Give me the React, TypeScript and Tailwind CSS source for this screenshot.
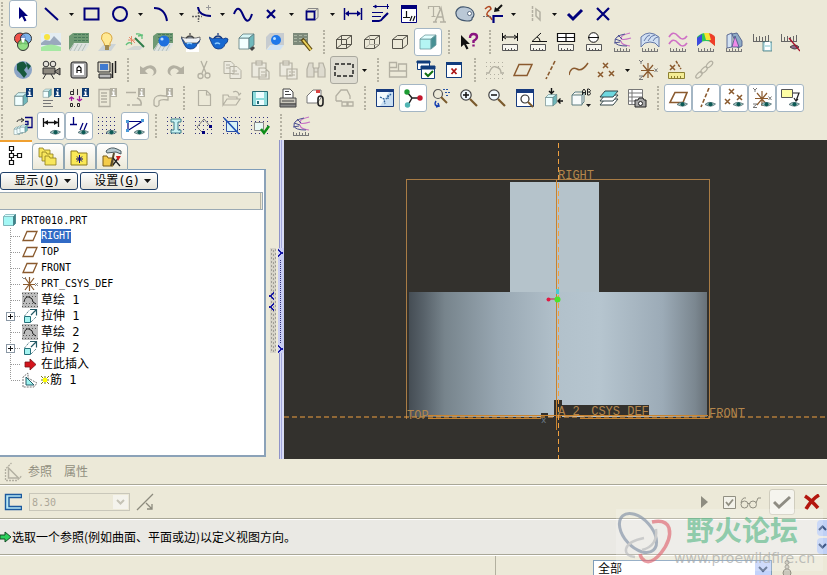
import React, { useState } from 'react';

const NAVY = '#00007b';
const GRAY = '#b3b0a2';
const BROWN = '#8a5a2e';

type IconMap = Record<string, React.ReactNode>;

/* ---------- Shared icon parts ---------- */

const Eye = () => (
  <g>
    <path d="M9 16.5q4-4 10.500-.5q-4 4-10.500.5z" fill="#9fc4c0" stroke="#3f5c63" strokeWidth=".7" />
    <circle cx="14.500" cy="16.200" r="2" fill="#0d5a55" />
  </g>
);

const Ruler = ({ y = 13 }: { y?: number }) => (
  <path
    d={`M2.500 ${y - 0.5}h15v6h-15zM5.500 ${y + 6}v-3M8.500 ${y + 6}v-2M11.500 ${y + 6}v-3M14.500 ${y + 6}v-2`}
    fill="#f6f5ee"
    stroke="#555"
    strokeWidth="1"
  />
);

const Comb = () => (
  <path d="M2 19.500h16M2.500 19v-3M5.500 19v-2M8.500 19v-3M11.500 19v-2M14.500 19v-3M17.500 19v-2" fill="none" stroke="#777" strokeWidth="1" />
);

const Info = ({ off }: { off?: boolean }) => (
  <g>
    <rect x="13" y="0" width="7" height="9" fill={off ? GRAY : '#0d3a72'} />
    <path d="M16 1h1.500v1.500h-1.500zM15 3.500h2.500v3.500h1v1h-4v-1h1.200v-2.500h-.7z" fill="#fff" />
  </g>
);

const Cube = ({ x = 0, y = 0, s = 1 }: { x?: number; y?: number; s?: number }) => (
  <g transform={`translate(${x} ${y}) scale(${s})`} stroke="#5a7c80" strokeWidth=".8">
    <path d="M2 6h10v11h-10z" fill="#f2ffff" />
    <path d="M2 6l4-4h11l-5 4z" fill="#d8f6f6" />
    <path d="M12 6l5-4v11l-5 4z" fill="#6fb8bb" />
  </g>
);

const Teapot = ({ white }: { white?: boolean }) => (
  <g>
    {white && <path d="M5 12h13v8h-13z" fill="#fff" />}
    <path d="M4 7L0 5l3 7q2 5 6 5q6 0 7-5q3-1 3-5q-2-2-5 0l-1-1H5z" fill="#1768d0" stroke="#12357e" strokeWidth=".8" />
    {white && <path d="M3 9L0 5l4 1h11l4-1v3l-3 3H4z" fill="#eef1f4" stroke="#444" strokeWidth=".7" />}
    <path d="M5 6q4-4 8 0M9 3V1" stroke={white ? '#444' : '#12357e'} fill="none" strokeWidth="1.200" />
    <path d="M6 12q2-2 5 0" stroke="#8ccbff" fill="none" strokeWidth="1.500" />
  </g>
);

const Floor = () => (
  <g>
    <path d="M0 4L4 1h16v12H5L0 18z" fill="#6f9a74" />
    <path d="M5 2.500h14M5 5.500h14M5 8.500h14M5 11.500h14" stroke="#48795a" strokeDasharray="3 1" />
    <path d="M0 19l5-8h15v2l-4 6z" fill="#dfe3e0" />
    <path d="M1 19l4-7M5 19l4-7M9 19l4-7M13 19l4-7" stroke="#aab6b0" strokeWidth=".8" />
  </g>
);

const Csys = () => (
  <g fill="none">
    <path d="M5 5l10 12M15 5L5 17M3 10.500h13M10 3v15" stroke={BROWN} strokeWidth="1.200" />
    <path d="M1 0l2 2l2-2M3 2v2M1 16h4l-4 3.500h4M16.500 8.500l3 3.500M19.500 8.500l-3 3.500" stroke="#777" />
  </g>
);

const Crosses = ({ pts }: { pts: number[][] }) => (
  <g stroke={BROWN} strokeWidth="1.500">
    {pts.map(([x, y]) => (
      <path key={`${x}-${y}`} d={`M${x - 2} ${y - 2}l5 5M${x + 3} ${y - 2}l-5 5`} />
    ))}
  </g>
);

const DotGrid = () => (
  <path d="M1 1.500h18M1 5.500h18M1 9.500h18M1 13.500h18M1 17.500h18" stroke="#33337f" strokeDasharray="1 3" />
);

const Glass = ({ sign }: { sign: string }) => (
  <g fill="none">
    <path d="M11 11l7 7" stroke="#7a5a2c" strokeWidth="2.200" />
    <circle cx="7" cy="7" r="5.200" fill="#f4fbff" stroke="#444" strokeWidth="1.200" />
    <path d={sign} stroke="#111" strokeWidth="1.500" />
  </g>
);

const WireCube = ({ inner }: { inner?: React.ReactNode }) => (
  <g fill="none" stroke="#55534a" strokeWidth="1">
    <path d="M2.500 7.500h10v9h-10zM2.500 7.500l5-4h10l-5 4M17.500 3.500v9l-5 4" />
    {inner}
  </g>
);

const ICONS: IconMap = {
  /* sketcher */
  select: <path d="M6 3v12l3-2.500l2.500 5l2-1l-2.300-4.500h3.800z" fill={NAVY} />,
  line: <path d="M4 4l13 12" stroke={NAVY} strokeWidth="2" />,
  rect: <path d="M2.500 4.500h14v11h-14z" stroke={NAVY} strokeWidth="2" fill="none" />,
  circle: <circle cx="10" cy="10" r="7" stroke={NAVY} strokeWidth="2" fill="none" />,
  arc: <path d="M3 4q11 0 13 13" stroke={NAVY} strokeWidth="2" fill="none" />,
  fillet: (
    <g fill="none">
      <path d="M6 3q1 9 13 9" stroke={NAVY} strokeWidth="2" />
      <path d="M0 12.500h10M6.500 8v10" stroke="#666" strokeDasharray="2 1" strokeWidth="1.500" />
      <path d="M16.500 1v5M14 3.500h5" stroke="#999" />
    </g>
  ),
  spline: <path d="M1 10q4-11 9 1t9-1" stroke={NAVY} strokeWidth="2" fill="none" />,
  point: <path d="M6 6l8 8M14 6l-8 8" stroke={NAVY} strokeWidth="2.200" />,
  edge: (
    <g fill="none">
      <path d="M4 7l2-2.500h10v9l-3 2.500M13 7l3-2.500" stroke="#888" />
      <path d="M4.500 7.500h8v8h-8z" stroke={NAVY} strokeWidth="1.800" />
    </g>
  ),
  dimension: (
    <g stroke={NAVY} fill={NAVY}>
      <path d="M1.500 4v12M18.500 4v12M3 9.500h14" fill="none" strokeWidth="1.500" />
      <path d="M2 9.500l4-3v6zM18 9.500l-4-3v6z" stroke="none" />
    </g>
  ),
  modify: (
    <g fill="none" stroke={NAVY}>
      <path d="M2 2.500h16M16.500 0v5M3 2.500l2-1.500v3z" />
      <path d="M1 17h7q2 0 4-3l5-5" strokeWidth="2.200" />
      <path d="M1 8.500h11M1 12.500h9" />
    </g>
  ),
  constrain: (
    <g>
      <path d="M2.500 1.500h15v17h-15z" fill="#fff" stroke={NAVY} />
      <path d="M2 1h16v4h-16z" fill={NAVY} />
      <path d="M7.500 7v6M4 13.500h7M11 17l2-5M14 17l2-5" stroke="#111" fill="none" strokeWidth="1.200" />
    </g>
  ),
  text: (
    <g fill="none" stroke={GRAY}>
      <path d="M6 18h4M13 18h6M8 18L14 4l3 14M10 13h6" strokeWidth="1.500" />
      <path d="M1.500 5V2.500h11V5M6.500 3v9M4.500 12.500h4" strokeWidth="1.200" />
    </g>
  ),
  palette: (
    <g>
      <path d="M1 8q2-6 9-5q8 1 9 7q0 3-2 4q1 3-5 3Q0 16 1 8z" fill="#bac8d6" stroke="#42566d" strokeWidth="1.200" />
      <circle cx="14.500" cy="9.500" r="2" fill="#fff" stroke="#42566d" strokeWidth=".8" />
    </g>
  ),
  trim: (
    <g fill="none">
      <path d="M2 5q5-5 6 0q-5 4-4 6q4 2 5 5" stroke="#b14720" strokeWidth="1.500" />
      <path d="M10 12h10M10.500 11v8" stroke={NAVY} strokeWidth="2.200" />
      <path d="M19 1l-5 5" stroke="#111" strokeWidth="2" />
      <path d="M11 8l1-5l5 4z" fill="#111" />
      <path d="M0 12.500h9" stroke="#777" strokeDasharray="2 1" />
    </g>
  ),
  mirror: (
    <g stroke={GRAY} fill="none">
      <path d="M8.500 2v16" strokeDasharray="3 1" strokeWidth="1.500" />
      <path d="M12 5l4 3v8l-4-4z" strokeWidth="1.500" />
    </g>
  ),
  done: <path d="M3 10l5 5l9-9" stroke={NAVY} strokeWidth="3" fill="none" />,
  quit: <path d="M4 4l12 12M16 4L4 16" stroke={NAVY} strokeWidth="2.200" />,
  /* render */
  colors: (
    <g strokeWidth="1" stroke="#333">
      <circle cx="7" cy="6.500" r="5.500" fill="#f0524a" />
      <circle cx="13" cy="6.500" r="5.500" fill="#6aa9ee" fillOpacity=".85" />
      <circle cx="10" cy="13" r="5.500" fill="#7cdc70" fillOpacity=".8" />
      <path d="M8 6h4l-1 4.500H9z" fill="#fff" stroke="none" />
    </g>
  ),
  scene: (
    <g>
      <path d="M0 1h20v18h-20z" fill="#e4edf2" />
      <path d="M0 11l4-3l5 1l4-5l7 7v2H0z" fill="#9aa9bd" />
      <circle cx="6" cy="5" r="3" fill="#f7e441" />
      <path d="M0 15q10-5 20 0v4H0z" fill="#a5e8a2" />
    </g>
  ),
  room: <Floor />,
  light: (
    <g>
      <path d="M1 19l6-7h12l-5 7z" fill="#ccd4d8" />
      <path d="M7 11q-4-4-2-8q3-4 8-1q4 4 0 9v3h-5z" fill="#ffe994" stroke="#d8a53c" />
      <path d="M8 13h4v5h-4z" fill="#a08a50" />
    </g>
  ),
  magic: (
    <g fill="none">
      <path d="M1 18l8-4h10l-4 4z" fill="#d3d7d4" />
      <path d="M10 6l9 9" stroke="#2f7d4a" strokeWidth="2" />
      <path d="M3 8h7M6.500 4v9M4 5l6 6" stroke="#e88a6a" />
      <path d="M11 2q7-1 6 5M1 13q3-4 6-1M13 4l5-1" stroke="#61c07a" strokeWidth="1.300" />
    </g>
  ),
  ballroom: (
    <g>
      <Floor />
      <circle cx="11" cy="9" r="5.500" fill="#1e70de" />
      <circle cx="9" cy="7" r="1.600" fill="#b9dcff" />
    </g>
  ),
  teapot1: <Teapot white />,
  teapot2: <Teapot />,
  block: (
    <g>
      <path d="M12 16l4-2l2 2l-3 3z" fill="#444" />
      <Cube />
    </g>
  ),
  ball: (
    <g>
      <path d="M1 5l4-4h14v12H5l-4 5z" fill="#c7ccd0" />
      <path d="M2 18l4-5h13l-4 5z" fill="#cfe2f4" />
      <circle cx="11" cy="8" r="5" fill="#1e78ea" />
      <circle cx="9.500" cy="6.500" r="1.500" fill="#bce0ff" />
    </g>
  ),
  paint: (
    <g>
      <path d="M0 1h15v12h-15z" fill="#7d8a7b" />
      <path d="M1 3.500h13M1 6.500h13M1 9.500h9" stroke="#a9b5a2" strokeDasharray="3 2" />
      <path d="M9 7l9 11" stroke="#5f4a10" strokeWidth="4" />
      <path d="M10 8l8 10" stroke="#ecd35c" strokeWidth="2" />
    </g>
  ),
  wire: <WireCube inner={<path d="M7.500 3.500v9h10M2.500 16.500l5-4" />} />,
  hidden: <WireCube inner={<path d="M7.500 3.500v9h10M2.500 16.500l5-4" stroke="#b0ada0" />} />,
  nohidden: <WireCube />,
  shaded: (
    <g stroke="#6d9a9e" strokeWidth=".8">
      <path d="M2 7h11v10h-11z" fill="#b4f5f3" />
      <path d="M2 7l5-4h11l-5 4z" fill="#e2ffff" />
      <path d="M13 7l5-4v10l-5 4z" fill="#479094" />
    </g>
  ),
  help: (
    <g>
      <path d="M2 3v12l3-2.500l2.500 5l2-1l-2.500-4.500h4z" fill="#111" />
      <path d="M11 6q0-4 3.500-4t3.500 3q0 2-3.500 4v2M14.500 12.500v2" stroke="#8a1480" strokeWidth="2.400" fill="none" />
    </g>
  ),
  distance: (
    <g>
      <path d="M2.500 1v8M17.500 1v8M3 5h14M6 3l-3 2l3 2M14 3l3 2l-3 2" fill="none" stroke="#111" />
      <Ruler />
    </g>
  ),
  angle: (
    <g>
      <path d="M13 1L4 9.500h15M9 5q3 1 3 4" fill="none" stroke="#111" />
      <Ruler />
    </g>
  ),
  area: (
    <g>
      <path d="M1.500 1.500h17v8h-17zM10 1v9M2 5.500h16" fill="#fff" stroke="#111" strokeWidth="1.200" />
      <Ruler />
    </g>
  ),
  diameter: (
    <g>
      <circle cx="9.500" cy="5.500" r="4.800" fill="#fff" stroke="#111" />
      <path d="M4 5.500h11" stroke="#111" />
      <Ruler />
    </g>
  ),
  curvature: (
    <g fill="none">
      <path d="M18 1q-9 2-9 5t10 0M18 14q-9-1-9-5" stroke="#c872c6" strokeWidth="1.200" />
      <path d="M13 2Q2 4 3 10q1 4 12 4M3 7l6 2M2 11l6-1M6 3l4 4" stroke="#4b4f93" />
      <Comb />
    </g>
  ),
  section: (
    <g>
      <path d="M1 15V5q8-8 18 0v10l-4-4q-5-2-10 0z" fill="#d0dff2" stroke="#6579a8" />
      <path d="M4 9q3-6 6-6M8 9q3-6 7-6M13 9q2-4 5-4" fill="none" stroke="#6579a8" />
      <Comb />
    </g>
  ),
  offset: (
    <g fill="none">
      <path d="M1 5q4-7 9-1t9 0M1 12q4-7 9-1t9 0" stroke="#cf70c6" strokeWidth="1.700" />
      <Comb />
    </g>
  ),
  gauss: (
    <g>
      <path d="M1 14V5q8-8 18 0v9l-4-4q-5-2-10 0z" fill="#2dc75b" />
      <path d="M1 14V6l5-4v8z" fill="#3c49df" />
      <path d="M11 1q5 0 8 4v9l-5-4z" fill="#ef3d29" />
      <path d="M8 1h5l2 7h-5z" fill="#f5e634" />
      <Comb />
    </g>
  ),
  draft: (
    <g strokeWidth=".8" stroke="#435283">
      <path d="M3 3l5-2v14l-5 1z" fill="#d3e2f2" />
      <path d="M8 2l5-1l5 8v5l-4 2z" fill="#8fabc6" />
      <path d="M8 15l3-11l4 11z" fill="#f08ae8" />
      <Comb />
    </g>
  ),
  savean: (
    <g>
      <path d="M1.500 2v7M4.500 5v4M7.500 4v5M10.500 5v4M13.500 4v5M16.500 3v6M1 9.500h16" stroke="#666" fill="none" />
      <path d="M11 10h9v9h-9z" fill="#bfe2e6" stroke="#447a80" strokeWidth=".8" />
      <path d="M13 10h5v3h-5zM13 15h5v3h-5z" fill="#fff" />
    </g>
  ),
  hidean: (
    <g>
      <path d="M1.500 2v7M4.500 5v4M7.500 4v5M10.500 5v4M13.500 4v5M16.500 3v6M1 9.500h16" stroke="#666" fill="none" />
      <path d="M10 15q5-4 9 0q-4 4-9 0z" fill="#868" stroke="#444" />
      <path d="M9 6l11 13" stroke="#a5122a" strokeWidth="1.300" />
    </g>
  ),
  /* app */
  globe: (
    <g>
      <circle cx="10" cy="10" r="9" fill="#8ba4c6" />
      <path d="M4 4q4-3 7-2l3 4l-3 4l3 4l-3 4l-4-5l-3-3zM13 2l5 4l-3 4z" fill="#17583c" />
    </g>
  ),
  camera: (
    <g stroke="#333" fill="#8e8a80">
      <circle cx="5" cy="4" r="2.800" fill="#e4e2da" />
      <circle cx="12" cy="4" r="2.800" fill="#e4e2da" />
      <path d="M2 8h12v6h-12zM14 11l5-3v7l-5-3z" />
      <path d="M5 14l-3 5M10 14l3 5" />
    </g>
  ),
  mapkey: (
    <g>
      <path d="M2 4q0-2 2-2h12q2 0 2 2v12q0 2-2 2h-12q-2 0-2-2z" fill="#aaa" stroke="#222" />
      <path d="M5 4h10v11h-10z" fill="#fff" />
      <path d="M8 13V8l2-2l2 2v5M8 10.500h4" stroke="#111" fill="none" strokeWidth="1.200" />
    </g>
  ),
  computer: (
    <g>
      <path d="M1 2h12v10h-12z" fill="#d8d5c8" stroke="#222" />
      <path d="M3 4h8v6h-8z" fill="#3f7ad0" />
      <path d="M2 14h12v4h-12z" fill="#bbb" stroke="#222" />
      <path d="M15.500 3v15M18.500 1v12" stroke="#222" strokeWidth="1.500" />
    </g>
  ),
  undo: <path d="M2 6v8h8l-3-3q4-5 8-1q2 3-1 6q6-2 4-7q-4-7-13-1z" fill={GRAY} />,
  redo: <path d="M18 6v8h-8l3-3q-4-5-8-1q-2 3 1 6q-6-2-4-7q4-7 13-1z" fill={GRAY} />,
  cut: (
    <g stroke={GRAY} strokeWidth="1.300" fill="none">
      <path d="M7 1l5 12M13 1L8 13" />
      <circle cx="6.500" cy="16" r="2.500" />
      <circle cx="13.500" cy="15.500" r="2.500" />
    </g>
  ),
  copy: <path d="M2 1.500h7l3 3v9H2zM8 6.500h7l4 4v8H8zM4 5h4M4 8h4M10 11h5M10 14h7" fill="#eceadf" stroke={GRAY} />,
  paste: <path d="M2 3h14v14H2zM6 1h6v4H6zM9 8h6l4 4v7H9zM11 12h4M11 15h6" fill="#eceadf" stroke={GRAY} strokeWidth="1.200" />,
  pastesp: <path d="M2 3h12v13H2zM5 1h6v4H5zM9 9h10v10H9zM11 12h2M14 12h3M11 15h2M14 15h3" fill="#eceadf" stroke={GRAY} strokeWidth="1.200" />,
  find: <path d="M3 3h4v4l1 2v8H1V9zM13 3h4l2 6v8h-7V9l1-2zM8 8h4v4H8z" fill="#dedbcf" stroke={GRAY} strokeWidth="1.200" />,
  marquee: <path d="M1 4h18v12H1z" fill="none" stroke="#222" strokeWidth="1.500" strokeDasharray="4 2" />,
  window: <path d="M1.500 2.500h7v5h-7zM1.500 8v9h17v-13h-8v7h-9M11 11h7" fill="none" stroke={GRAY} strokeWidth="1.300" />,
  activate: (
    <g stroke="#113c7d" fill="#fff">
      <path d="M1.500 1.500h12v8h-12z" />
      <path d="M1 1h13v2h-13z" fill="#113c7d" />
      <path d="M5.500 6.500h13v12h-13z" />
      <path d="M5 6h14v3h-14z" fill="#113c7d" />
      <path d="M9 13l3 3l5-5" fill="none" stroke="#127012" strokeWidth="2" />
    </g>
  ),
  close: (
    <g>
      <path d="M2.500 2.500h15v15h-15z" fill="#fff" stroke="#113c7d" />
      <path d="M2 2h16v3h-16z" fill="#113c7d" />
      <path d="M7.500 8.500l5 5.500M12.500 8.500l-5 5.500" stroke="#ad1616" strokeWidth="1.800" />
    </g>
  ),
  sketch: (
    <g fill="none" stroke={GRAY}>
      <path d="M1 2.500h18M1 6.500h18M1 14.500h18M1 18.500h18" strokeDasharray="1 3" />
      <path d="M1 13l3 0q3-8 7-6q5 1 5 6h3" strokeWidth="1.400" />
    </g>
  ),
  plane: <path d="M6 4.500h13l-5 11H1z" fill="none" stroke={BROWN} strokeWidth="1.500" />,
  axis: <path d="M14 1L5 19" stroke={BROWN} strokeWidth="1.600" strokeDasharray="4 2" />,
  curve: <path d="M0 15q2-9 8-6q5 3 11-6" stroke={BROWN} strokeWidth="1.500" fill="none" />,
  points: <Crosses pts={[[8, 5], [3, 14], [14, 13]]} />,
  csys: <Csys />,
  analysis: (
    <g>
      <Crosses pts={[[6, 7]]} />
      <path d="M10 1l5 8" stroke={BROWN} strokeDasharray="3 1" strokeWidth="1.500" />
      <path d="M2.500 12.500h16v6h-16z" fill="#f3ec94" stroke="#8c8031" />
      <path d="M5.500 19v-3M8.500 19v-3M11.500 19v-3M14.500 19v-3" stroke="#8c8031" />
    </g>
  ),
  chain: (
    <g fill="none" stroke={GRAY} strokeWidth="1.300">
      <ellipse cx="5" cy="15" rx="4" ry="2" transform="rotate(-45 5 15)" />
      <ellipse cx="10" cy="10" rx="4" ry="2" transform="rotate(-45 10 10)" />
      <ellipse cx="15.500" cy="4.500" rx="4" ry="2" transform="rotate(-45 15.500 4.500)" />
    </g>
  ),
  /* file and view */
  infopart: (
    <g>
      <Cube y={3} s={0.85} />
      <Info />
    </g>
  ),
  infofeat: (
    <g>
      <Cube x={1} s={0.55} />
      <path d="M2 12.500h10M2 15.500h8M2 18.500h10" stroke="#777" />
      <Info />
    </g>
  ),
  infodim: (
    <g>
      <path d="M4.500 1v6M4 3.500H1.500v3H4M8.500 1v6" stroke="#333" fill="none" />
      <path d="M0 11l2.500-2l2.500 2M2.500 9v4M8 11l2.500 2l2.500-2M10.500 8v5" stroke="#a01a9c" fill="none" strokeWidth="1.300" />
      <path d="M1.500 15.500h2v3h-2zM8.500 15.500h2v3h-2zM5.500 18v1" stroke="#222" fill="none" />
      <Info />
    </g>
  ),
  inforep: (
    <g>
      <path d="M2 1.500h11v17H2zM4 5h6M4 8h6M4 11h6M4 14h6" fill="none" stroke={GRAY} strokeWidth="1.300" />
      <Info off />
    </g>
  ),
  infoedge: (
    <g>
      <path d="M1 4.500h10M12 10q5 2 4 7H7M2 17h3" fill="none" stroke={GRAY} strokeWidth="1.500" />
      <Info off />
    </g>
  ),
  infopipe: (
    <g>
      <path d="M12 8q-10-2-11 4v5q3 3 5 0v-4q2-2 9-1v-4z" fill="none" stroke={GRAY} strokeWidth="1.300" />
      <Info off />
    </g>
  ),
  new: <path d="M4.500 2.500h8l4 4v11H4.500zM12.500 3v4h4" fill="none" stroke={GRAY} strokeWidth="1.200" />,
  open: <path d="M1 17V7h5l1 2h8v2H5zM5 11h13l-4 6H1M11 4q5-2 6 3l2-2" fill="none" stroke={GRAY} strokeWidth="1.200" />,
  save: (
    <g>
      <path d="M2.500 3.500h15v14h-15z" fill="#8fdcdc" stroke="#276a74" />
      <path d="M6 4h8v6H6zM6 12h8v5H6z" fill="#eefcff" />
      <path d="M7 13h2v3H7z" fill="#276a74" />
    </g>
  ),
  print: (
    <g stroke="#444">
      <path d="M5 10V1h7l3 3v6" fill="#fff" />
      <path d="M2 10h16v6H2z" fill="#c9c6bb" />
      <path d="M4 13h12M7 3.500h4M7 6.500h6" />
      <path d="M2 16h16v3H2z" fill="#888" />
    </g>
  ),
  mail: (
    <g>
      <path d="M1 8l6-6h8v8l-4 5H1z" fill="#fff" stroke="#777" />
      <path d="M10 2h4v3h-4z" fill="#d84545" />
      <path d="M12 11q0-3 2.500-3t2.500 3v4q0 3-2.500 3t-2.500-3z" fill="none" stroke="#222" strokeWidth="1.600" />
    </g>
  ),
  maillink: <path d="M2 13V8l5-6h6l3 6v3M2 13h6M8 14h5v4H8zM14 14h5v4h-5z" fill="none" stroke={GRAY} strokeWidth="1.300" />,
  repaint: (
    <g>
      <path d="M1.500 1.500h17v17h-17z" fill="#c9dff2" stroke="#173b7f" />
      <path d="M2 4h12L5 18H2z" fill="#f4fafd" />
      <path d="M1 1h18v3H1z" fill="#173b7f" />
      <path d="M5 9l4 2l1 5M16 6l-5 5M13 7v4" stroke="#2b609a" strokeWidth="1.300" strokeDasharray="2 1" fill="none" />
    </g>
  ),
  spin: (
    <g>
      <path d="M4 4l5 6h8M9 10l-4 7" stroke="#222" strokeWidth="1.500" fill="none" />
      <circle cx="4" cy="4" r="2.700" fill="#1c9b32" />
      <circle cx="17" cy="10" r="2.700" fill="#c4162c" />
      <circle cx="4.500" cy="17" r="2.700" fill="#51b5b3" />
    </g>
  ),
  orient: (
    <g fill="none">
      <circle cx="7" cy="6" r="4.500" stroke="#555" strokeWidth="1.200" />
      <path d="M10 9l6 6" stroke="#7a5a2c" strokeWidth="2" />
      <path d="M12 1.500h5M14 4.500h5M15 7.500h3" stroke="#2653a5" strokeDasharray="2 1" />
      <path d="M5 13q-3 5 3 5l-1-3M8 18l-3 1" stroke="#163fb0" strokeWidth="1.500" />
    </g>
  ),
  zoomin: <Glass sign="M4 7h6M7 4v6" />,
  zoomout: <Glass sign="M4 7h6" />,
  refit: (
    <g>
      <path d="M1.500 1.500h17v17h-17z" fill="#fff" stroke="#173b7f" />
      <path d="M1 1h18v4H1z" fill="#173b7f" />
      <circle cx="10" cy="11" r="4" fill="none" stroke="#333" strokeWidth="1.200" />
      <path d="M13 14l5 5" stroke="#7a5a2c" strokeWidth="2" />
    </g>
  ),
  reorient: (
    <g>
      <Cube x={1} y={5} s={0.75} />
      <path d="M8.500 0v5M6 3l2.500 2.500l2.500-2.500M20 13h-5M17.500 10.500l-2.500 2.500l2.500 2.500" stroke="#111" fill="none" strokeWidth="1.400" />
    </g>
  ),
  saved: (
    <g fill="none">
      <path d="M1 7l3-3h7M1 7h10v10H1zM11 7l2-2v9l-2 2" stroke="#5c7c80" fill="#f8fbfb" />
      <path d="M11.500 7V3l1.500-2l1.500 2v4M11.500 4.500h3M16.500 1v6h2l1-1.500l-1-1.500l1-1.500L18 1zM16.500 4h2" stroke="#222" />
      <path d="M15 16h5l-2.500 3z" fill="#222" />
    </g>
  ),
  layers: (
    <g stroke="#35474a">
      <path d="M6 11h13l-5 6H1z" fill="#fff" />
      <path d="M6 7h13l-5 6H1z" fill="#fff" />
      <path d="M6 3h13l-5 6H1z" fill="#6fd8df" />
    </g>
  ),
  viewmgr: (
    <g>
      <path d="M1.500 1.500h14v15h-14zM1 5h14M1 9h14M1 13h14M5 1v15" fill="#fff" stroke="#777" />
      <path d="M8 12h3l1-2h4l1 2h2v7H8z" fill="#a6a6a6" stroke="#222" />
      <circle cx="13.500" cy="15.500" r="2" fill="#fff" stroke="#222" />
    </g>
  ),
  showplane: (
    <g>
      <path d="M7 4.500h12l-4 10H2z" fill="none" stroke={BROWN} strokeWidth="1.600" />
      <Eye />
    </g>
  ),
  showaxis: (
    <g>
      <path d="M13 0L5 19" stroke={BROWN} strokeWidth="1.600" strokeDasharray="4 2" />
      <Eye />
    </g>
  ),
  showpoints: (
    <g>
      <Crosses pts={[[7, 3], [15, 9], [3, 13]]} />
      <Eye />
    </g>
  ),
  showcsys: (
    <g>
      <Csys />
      <Eye />
    </g>
  ),
  shownotes: (
    <g>
      <path d="M1.500 1.500h11v8H1.500z" fill="#ffffa5" stroke="#555" />
      <path d="M13 5h6l-3 8M14 10l2 3l2-2" stroke="#222" fill="none" strokeWidth="1.200" />
      <Eye />
    </g>
  ),
  /* sketch display */
  sketchview: (
    <g>
      <path d="M12 1.500h7v10h-6M12 5.500h3v3h-3" stroke={NAVY} strokeWidth="1.300" fill="none" />
      <path d="M4 6q0-3 7-2M8 2l3 2l-3 2" stroke="#333" fill="none" />
      <Cube x={0} y={10} s={0.5} />
      <Cube x={3} y={9} s={0.5} />
      <Cube x={6} y={8} s={0.5} />
    </g>
  ),
  showdims: (
    <g>
      <path d="M2.500 2v9M17.500 2v9M3 6.500h14" stroke="#111" strokeWidth="1.300" />
      <path d="M3 6.500l4-2.500v5zM17 6.500l-4-2.500v5z" fill="#111" />
      <Eye />
    </g>
  ),
  showcons: (
    <g>
      <path d="M4.500 1v7M1 8.500h7M11 14l3-7M15 14l3-7" stroke={NAVY} strokeWidth="1.300" />
      <Eye />
    </g>
  ),
  showgrid: (
    <g>
      <DotGrid />
      <Eye />
    </g>
  ),
  showverts: (
    <g>
      <path d="M3 5.500h14l-14 9z" stroke={NAVY} fill="none" strokeWidth="1.200" />
      <path d="M1 4h3v3H1zM16 3h3v3h-3zM1 13h3v3h-3z" fill="#4a9ad8" />
      <Eye />
    </g>
  ),
  diag1: (
    <g>
      <DotGrid />
      <path d="M5 3h10v3h-3v8h3v3H5v-3h3V6H5z" fill="#c8f2f3" stroke="#3c7c88" />
    </g>
  ),
  diag2: (
    <g>
      <DotGrid />
      <path d="M3 11l7-8l6 7M3 11l5 5" stroke="#777" fill="none" />
      <path d="M15 9h3v3h-3zM8 15h3v3h-3z" fill={NAVY} />
    </g>
  ),
  diag3: (
    <g>
      <DotGrid />
      <path d="M4.500 5.500h11v10h-11z" fill="#d8f2f6" stroke="#2b4ea5" />
      <path d="M2 2l15 16" stroke="#1b4eb5" strokeWidth="1.600" />
    </g>
  ),
  diag4: (
    <g>
      <DotGrid />
      <path d="M4.500 6.500h9v8H4.500z" fill="#e8f8f6" stroke="#888" />
      <path d="M11 13l3 4l5-7" stroke="#0d8d16" strokeWidth="2.500" fill="none" />
    </g>
  ),
};

/* ---------- Toolbar rows ----------
   "|" separator, "v" drop-down arrow, trailing "*" pressed, "#" pressed gray */

const TOOLBARS: { name: string; items: string[] }[] = [
  {
    name: 'Sketcher',
    items: 'select* line v rect circle v arc v fillet v spline point v edge v dimension modify constrain text palette trim v mirror v done quit'.split(' '),
  },
  {
    name: 'Render and measure',
    items: 'colors scene room light magic ballroom teapot1 teapot2 block ball paint | wire hidden nohidden shaded* | help | distance angle area diameter curvature section offset gauss draft savean hidean'.split(' '),
  },
  {
    name: 'Edit and datum',
    items: 'globe camera mapkey computer | undo redo cut copy paste pastesp find marquee# v | window activate close | sketch plane axis curve points v csys analysis chain'.split(' '),
  },
  {
    name: 'File and view',
    items: 'infopart infofeat infodim inforep infoedge infopipe | new open save print mail maillink | repaint spin* orient zoomin zoomout refit reorient saved layers viewmgr | showplane* showaxis* showpoints* showcsys* shownotes*'.split(' '),
  },
  {
    name: 'Sketch display',
    items: 'sketchview showdims* showcons* showgrid showverts* | diag1 diag2 diag3 diag4 | curvature'.split(' '),
  },
];

const Toolbar: React.FC<{ name: string; items: string[] }> = ({ name, items }) => (
  <div role="toolbar" aria-label={name} className="flex h-7 items-center">
    <span className="mr-1.5 ml-px h-6 border-l-2 border-dotted border-[#b5b2a3]" />
    {items.map((item, i) => {
      if (item === '|') {
        return (
          <span key={i} className="flex w-[13px] justify-center">
            <span className="h-6 border-l-2 border-dotted border-[#b5b2a3]" />
          </span>
        );
      }
      if (item === 'v') {
        return (
          <button key={i} aria-label="More" className="flex h-7 w-[13px] items-center justify-center">
            <svg width="5" height="3" viewBox="0 0 5 3">
              <path d="M0 0h5L2.500 3z" fill="#111" />
            </svg>
          </button>
        );
      }
      const id = item.replace(/[*#]/, '');
      const state = item.endsWith('*')
        ? 'border-[#a4b6c4] bg-white'
        : item.endsWith('#')
        ? 'border-[#aaa99f] bg-[#dfddd2]'
        : 'border-transparent';
      return (
        <button key={i} aria-label={id} className={`flex size-7 items-center justify-center rounded-[3px] border ${state}`}>
          <svg width="20" height="20" viewBox="0 0 20 20" className="shrink-0">
            {ICONS[id]}
          </svg>
        </button>
      );
    })}
  </div>
);

/* ---------- Model tree ---------- */

const FEATURE_ICONS: IconMap = {
  plane: <path d="M5 3.500h10l-4 9H1z" fill="none" stroke={BROWN} strokeWidth="1.300" />,
  csys: (
    <g fill="none">
      <path d="M3 2l9 12M12 2L3 14M1 8.500h12M7.500 1v14" stroke={BROWN} strokeWidth="1.200" />
      <path d="M0 1l2 2l2-2M13 7l3 3M16 7l-3 3" stroke="#888" />
    </g>
  ),
  sketch: (
    <g fill="none">
      <path d="M0 0h16v16H0z" fill="#bdbdbd" />
      <path d="M0 1.500h16M0 14.500h16M1 4.500h14M1 11.500h14" stroke="#555" strokeDasharray="1 2" />
      <path d="M2 10q1-6 5-5t4 5l3 2" stroke="#222" />
    </g>
  ),
  extrude: (
    <g fill="none">
      <path d="M2.500 8.500h6v6H2.500z" fill="#a4f3f0" stroke="#24707a" />
      <path d="M8 1.500h6.500v6M9 7l5-5" stroke="#245a66" strokeWidth="1.200" />
      <path d="M2.500 8l5-6M9 14l5-5" stroke="#245a66" strokeDasharray="1 1" />
    </g>
  ),
  insert: <path d="M3 6h5V3l6 5.500L8 14v-3H3z" fill="#d4141c" stroke="#76151a" strokeWidth=".8" />,
  rib: (
    <g fill="none">
      <path d="M1 15V5l5-4v5l9 5l-3 4z" stroke="#777" strokeDasharray="2 1" />
      <path d="M4 5v8h8z" fill="#9cf3ef" stroke="#245a66" />
    </g>
  ),
};

interface Feature {
  label: string;
  icon: string;
  expandable?: boolean;
  failed?: boolean;
}

const FEATURES: Feature[] = [
  { label: 'RIGHT', icon: 'plane' },
  { label: 'TOP', icon: 'plane' },
  { label: 'FRONT', icon: 'plane' },
  { label: 'PRT_CSYS_DEF', icon: 'csys' },
  { label: '草绘 1', icon: 'sketch' },
  { label: '拉伸 1', icon: 'extrude', expandable: true },
  { label: '草绘 2', icon: 'sketch' },
  { label: '拉伸 2', icon: 'extrude', expandable: true },
  { label: '在此插入', icon: 'insert' },
  { label: '筋 1', icon: 'rib', failed: true },
];

const ModelTree = () => {
  const [selected, setSelected] = useState('RIGHT');

  return (
    <ul className="pt-0.5 text-black">
      <li className="flex h-4 items-center gap-1 pl-0.5 text-[10px]">
        <svg width="15" height="14" viewBox="0 0 15 14">
          <path d="M1.500 3.500h10v9h-10z" fill="#a4f7f5" stroke="#7fb5ba" />
          <path d="M1.500 3.500l2-2h10l-2 2z" fill="#d9ffff" stroke="#7fb5ba" strokeWidth=".8" />
          <path d="M11.500 3.500l2-2v9l-2 2z" fill="#3f8188" stroke="#3f8188" strokeWidth=".8" />
        </svg>
        PRT0010.PRT
      </li>
      {FEATURES.map((f, i) => (
        <li key={f.label} className="flex h-4 items-center pl-[5px]">
          <svg width="16" height="16" viewBox="0 0 16 16" className="shrink-0" shapeRendering="crispEdges">
            <path d={i === FEATURES.length - 1 ? 'M5.500 0v8M6 8.500h10' : 'M5.500 0v16M6 8.500h10'} stroke="#999" strokeDasharray="1 1" fill="none" />
            {f.expandable && (
              <g>
                <path d="M1.500 4.500h8v8h-8z" fill="#fff" stroke="#8b98a5" />
                <path d="M3 8.500h5M5.500 6v5" stroke="#111" />
              </g>
            )}
          </svg>
          <svg width="16" height="16" viewBox="0 0 16 16" className="mr-[3px] ml-px shrink-0">
            {FEATURE_ICONS[f.icon]}
          </svg>
          {f.failed && (
            <svg width="8" height="8" viewBox="0 0 8 8" className="mr-px">
              <path d="M0 0l8 8M8 0L0 8M4 0v8M0 4h8" stroke="#77771a" />
              <path d="M2 2h4v4H2z" fill="#ff0" />
            </svg>
          )}
          <button
            onClick={() => setSelected(f.label)}
            className={`h-3.5 whitespace-pre leading-[14px] ${i < 4 ? 'text-[10px]' : 'text-xs'} ${
              selected === f.label ? 'bg-[#316ac5] text-white' : ''
            }`}
          >
            {f.label}
          </button>
        </li>
      ))}
    </ul>
  );
};

const MenuButton: React.FC<{ label: string; hotkey: string }> = ({ label, hotkey }) => (
  <button className="flex h-[18px] w-[78px] items-center justify-end gap-1 rounded-[3px] border border-[#1f3f68] bg-gradient-to-b from-white to-[#e4e2d8] pr-1.5 text-xs leading-4">
    <span>
      {label}(<u>{hotkey}</u>)
    </span>
    <svg width="7" height="4" viewBox="0 0 7 4">
      <path d="M0 0h7L3.500 4z" fill="#111" />
    </svg>
  </button>
);

const Folder = ({ x, y }: { x: number; y: number }) => (
  <path d={`M${x} ${y}h4l1 2h6v7H${x}z`} fill="#f8e75c" stroke="#8c7b1c" strokeWidth=".8" />
);

const TABS = [
  {
    label: 'Model tree',
    icon: <path d="M5.500 2.500h4v4h-4zM5.500 9.500h4v4h-4zM5.500 16.500h4v4h-4zM13.500 9.500h4v4h-4zM7.500 7v2M7.500 14v2M10 11.500h3" fill="none" stroke="#111" strokeWidth="1.200" />,
  },
  {
    label: 'Folders',
    icon: (
      <g>
        <Folder x={3} y={3} />
        <Folder x={6} y={7} />
        <Folder x={9} y={11} />
      </g>
    ),
  },
  {
    label: 'Favorites',
    icon: (
      <g>
        <path d="M3 6h6l1 2h9v12H3z" fill="#fae956" stroke="#8c7b1c" />
        <path d="M11.500 10v8M8 14h7M9 11.500l5 5M14 11.500l-5 5" stroke={NAVY} />
      </g>
    ),
  },
  {
    label: 'Connections',
    icon: (
      <g>
        <path d="M3 11h4l1 2h5v8H3z" fill="#f4cb4a" stroke="#7a5d16" />
        <path d="M6 6q5-5 11-2l4 2v3l-5-2l-9 1z" fill="#b7c9cf" stroke="#4a5a60" />
        <path d="M14 8l-3 13" stroke="#5a4a2a" strokeWidth="2" />
        <path d="M13 13l7 8M19 12l-6 8" stroke="#222" strokeWidth="1.300" />
        <path d="M16 11l5 0l-3 5z" fill="#d31d1d" />
      </g>
    ),
  },
];

const Navigator = () => (
  <aside className="flex w-[266px] shrink-0 flex-col pb-0.5">
    <div role="tablist" className="flex h-[30px] shrink-0 items-end">
      {TABS.map((tab, i) => (
        <button
          key={tab.label}
          role="tab"
          aria-label={tab.label}
          aria-selected={i === 0}
          className={`flex w-8 items-center justify-center ${
            i === 0
              ? 'h-[30px] border-t-2 border-[#f0a030] bg-white'
              : 'h-[27px] rounded-t border border-[#91a7b4] bg-gradient-to-b from-white to-[#ece9d8]'
          }`}
        >
          <svg width="24" height="24" viewBox="0 0 24 24" className="shrink-0">
            {tab.icon}
          </svg>
        </button>
      ))}
      <span className="flex-1 self-end border-b border-[#7f9db9]" />
    </div>
    <div className="flex min-h-0 flex-1 flex-col border-r-2 border-b-2 border-[#8ba2b8] bg-white">
      <div className="flex shrink-0 gap-0.5 pt-0.5 pb-0.5">
        <MenuButton label="显示" hotkey="O" />
        <MenuButton label="设置" hotkey="G" />
      </div>
      <div className="mr-px h-[18px] shrink-0 border border-l-0 border-[#9aa9b4] bg-[#ece9d8] pr-px">
        <div className="h-full border-r border-[#b7b4a4]" />
      </div>
      <ModelTree />
    </div>
  </aside>
);

const Sash = () => (
  <div className="flex w-[18px] shrink-0 justify-end">
    <svg width="16" height="100%" className="h-full" shapeRendering="crispEdges">
      <path d="M11.500 0v1000" stroke="#8f93c8" />
      <path d="M12 0h4v1000h-4z" fill="#d7daf3" />
      <path d="M13.500 0v1000" stroke="#a3a7dc" />
      <path d="M2 108h6v105H2z" fill="#d6d3c8" />
      <path d="M10 108h6v105h-6z" fill="#c9cdf2" />
      <path d="M3.500 109v103M5.500 110v102M7.500 109v103" stroke="#a09e96" strokeDasharray="2 2" />
      <path d="M12.500 120v84" stroke="#33337c" strokeDasharray="1 1" />
      <path d="M10 110l4 3l-4 3M10 206l4 3l-4 3M6 153l-4 3l4 3M6 164l-4 3l4 3" fill="none" stroke="#1717a5" strokeWidth="1.500" />
    </svg>
  </div>
);

/* ---------- Graphics window ---------- */

const Viewport = () => (
  <main className="min-w-0 flex-1 bg-[#33312d]">
    <svg viewBox="284 140 543 319" preserveAspectRatio="xMidYMid slice" className="h-full w-full font-['Liberation_Mono',monospace]">
      <defs>
        <linearGradient id="drum">
          <stop offset="0" stopColor="#454d54" />
          <stop offset=".05" stopColor="#58626a" />
          <stop offset=".12" stopColor="#77848c" />
          <stop offset=".3" stopColor="#98a7b2" />
          <stop offset=".5" stopColor="#b2c1cb" />
          <stop offset=".64" stopColor="#b6c5cf" />
          <stop offset=".85" stopColor="#9cabb7" />
          <stop offset=".96" stopColor="#7b8790" />
          <stop offset="1" stopColor="#687178" />
        </linearGradient>
      </defs>
      <path d="M510 182h89v111h-89z" fill="#b5c3cb" />
      <path d="M409 292h298v125H409z" fill="url(#drum)" />
      <path d="M541 413h7v7h-7zM554 400h8v17h-8zM562 405h87v11h-87z" fill="#33312d" />
      <path d="M406 179h304v1h-304zM406 179h1v240h-1zM709 179h1v240h-1z" fill="#a97c45" />
      <path d="M428 415h280v1h-280zM428 418h113v1h-113zM580 418h129v1h-129zM556 180h1v250h-1z" fill="#c8832f" />
      <path d="M558.500 143v316" stroke="#f0a040" strokeDasharray="5 3" />
      <path d="M284 417h543" stroke="#f0a040" strokeDasharray="5 3" />
      <path d="M548 299h9" stroke="#d01c3c" />
      <circle cx="548.500" cy="299.500" r="2" fill="#e11a43" />
      <circle cx="557.500" cy="299.500" r="3" fill="#4be42c" />
      <path d="M556 289h3v5h-3z" fill="#4bc9d0" />
      <g fill="#b3864c" fontSize="12">
        <text x="558" y="179">RIGHT</text>
        <text x="407" y="419">TOP</text>
        <text x="709" y="417">FRONT</text>
        <text x="558" y="415">A_2</text>
        <text x="584" y="415">_CSYS_DEF</text>
      </g>
      <text x="541" y="423" fill="#6d7d8a" fontSize="9">x</text>
    </svg>
  </main>
);

/* ---------- Dashboard, messages and status ---------- */

const Dashboard = () => (
  <section className="shrink-0">
    <div className="flex h-[26px] items-center border-b border-[#a9a797] pl-1 text-xs text-[#918f80]">
      <svg width="20" height="20" viewBox="0 0 20 20" fill="none" stroke={GRAY}>
        <path d="M1.500 18V7l6-6M2 18.500h11l5-5" strokeDasharray="2 1" strokeWidth="1.300" />
        <path d="M4.500 6v10h10z" strokeWidth="1.500" />
      </svg>
      <button className="ml-1">参照</button>
      <button className="ml-3">属性</button>
    </div>
    <div className="flex h-[34px] items-center border-t border-b border-t-white border-b-[#a9a797] px-1">
      <svg width="18" height="18" viewBox="0 0 18 18">
        <path d="M1.500 1.500h16v3H5v9h12.500v3h-16z" fill="#b8e8f5" stroke="#1c5a9e" strokeWidth="1.400" />
      </svg>
      <label className="relative ml-[7px] flex">
        <select disabled aria-label="厚度" className="h-[18px] w-[101px] appearance-none border border-[#c9c7ba] bg-[#ece9d8] px-0.5 text-[10px] text-[#aca899] opacity-100">
          <option>8.30</option>
        </select>
        <svg width="15" height="14" viewBox="0 0 15 14" className="pointer-events-none absolute top-0.5 right-0.5">
          <path d="M0 0h15v14H0z" fill="#f4f3ec" />
          <path d="M4 5l3.500 3.500L11 5" fill="none" stroke="#c5c3b6" strokeWidth="2" />
        </svg>
      </label>
      <button aria-label="反向" className="ml-1.5">
        <svg width="18" height="18" viewBox="0 0 18 18" fill="none" stroke="#8c8a7d" strokeWidth="1.300">
          <path d="M1 17L17 1M10 10l6 6M16 11v5h-5" />
        </svg>
      </button>
      <div className="mr-0.5 ml-auto flex items-center">
        <button aria-label="继续">
          <svg width="8" height="14" viewBox="0 0 8 14">
            <path d="M0 1l7 6l-7 6z" fill="#8e8c80" />
          </svg>
        </button>
        <button role="checkbox" aria-checked="true" aria-label="预览" className="ml-3.5 flex items-center gap-1">
          <svg width="13" height="13" viewBox="0 0 13 13" fill="none" stroke="#918f82">
            <path d="M.5.5h12v12H.5z" fill="#f3f2ea" />
            <path d="M3 6l2.500 3L10 3.500" strokeWidth="1.800" />
          </svg>
          <svg width="21" height="13" viewBox="0 0 21 13" fill="none" stroke="#918f82">
            <circle cx="4.500" cy="8.500" r="3.500" />
            <circle cx="13" cy="8.500" r="3.500" />
            <path d="M1 7q1-6 5-5M8 8q1-2 2 0M16 7l2-5h3" />
          </svg>
        </button>
        <button aria-label="确定" className="ml-2 flex h-[26px] w-[26px] items-center justify-center rounded-[3px] border border-[#d0cdbe] bg-[#f5f4ee]">
          <svg width="18" height="16" viewBox="0 0 18 16">
            <path d="M1 8l5 5L17 3" fill="none" stroke="#8e8c83" strokeWidth="3" />
          </svg>
        </button>
        <button aria-label="取消" className="ml-2">
          <svg width="18" height="16" viewBox="0 0 18 16">
            <path d="M2 2q6 4 13 12M16 1Q9 5 3 15" fill="none" stroke="#b3160e" strokeWidth="3.500" />
          </svg>
        </button>
      </div>
    </div>
  </section>
);

const ScrollButton: React.FC<{ label: string; d: string }> = ({ label, d }) => (
  <button aria-label={label} className="flex h-4 w-2.5 items-center justify-center rounded-l-sm bg-[#bfd0f5]">
    <svg width="9" height="6" viewBox="0 0 9 6">
      <path d={d} fill="none" stroke="#3c5585" strokeWidth="2" />
    </svg>
  </button>
);

const MessageBar = () => (
  <div className="flex h-9 shrink-0 items-center justify-between border-t border-b border-t-white border-b-[#a9a797] bg-[#eae9e4]">
    <p className="flex items-center font-['Noto_Sans_CJK_SC',sans-serif] text-xs whitespace-nowrap text-black">
      <svg width="12" height="12" viewBox="0 0 12 12">
        <path d="M0 4h5V1l6 5l-6 5V8H0z" fill="#2cd05c" stroke="#144d25" />
      </svg>
      选取一个参照(例如曲面、平面或边)以定义视图方向。
    </p>
    <div className="flex flex-col gap-0.5">
      <ScrollButton label="向上" d="M1 5l3.500-3.500L8 5" />
      <ScrollButton label="向下" d="M1 1l3.500 3.500L8 1" />
    </div>
  </div>
);

const StatusBar = () => (
  <footer className="flex h-5 shrink-0 items-start overflow-hidden border-t border-white">
    <div className="h-full flex-1 border-r border-[#b3b09f]" />
    <div className="flex w-[331px] shrink-0 justify-start pt-1 pl-[97px]">
      <label className="relative flex">
        <select aria-label="过滤器" className="h-[18px] w-[179px] appearance-none border border-[#7f9db9] bg-white px-1 text-xs leading-4">
          <option>全部</option>
        </select>
        <svg width="16" height="16" viewBox="0 0 16 16" className="pointer-events-none absolute top-px right-px">
          <path d="M0 0h16v16H0z" fill="#c3d3fb" />
          <path d="M4 6l4 4l4-4" fill="none" stroke="#4d6185" strokeWidth="2" />
        </svg>
      </label>
      <svg width="14" height="18" viewBox="0 0 14 18" className="ml-2" fill="#c9c7bb" stroke="#918f82">
        <circle cx="7" cy="2.500" r="2" />
        <circle cx="7" cy="7" r="2" />
        <circle cx="7" cy="13" r="4" />
      </svg>
    </div>
  </footer>
);

const Watermark = () => (
  <div className="pointer-events-none absolute right-1 bottom-1 flex h-[62px] w-[207px] bg-white/20">
    <svg width="62" height="62" viewBox="0 0 62 62" fill="none" className="shrink-0 opacity-65">
      <ellipse cx="22" cy="24" rx="14" ry="23" transform="rotate(-42 22 24)" stroke="#8191a6" strokeWidth="3" />
      <path d="M36 13q14-3 17 6q3 11-8 25q-9 11-16 8q-4-2-5-7" stroke="#df6670" strokeWidth="3.500" />
      <path d="M28 29q-16 3-18 11q-1 7 9 8M40 20q2 17-14 21" stroke="#b7b9bc" strokeWidth="2.500" />
    </svg>
    <div className="-ml-1 flex flex-col whitespace-nowrap">
      <span className="pl-3 font-['Noto_Sans_CJK_SC',sans-serif] text-[28px] leading-[41px] font-bold text-[#58b886]/65">野火论坛</span>
      <span className="font-['DejaVu_Sans',sans-serif] text-[14px] leading-4 text-[#a5a7a6]/70">www.proewildfire.cn</span>
    </div>
  </div>
);

export default function App() {
  return (
    <div className="relative flex h-screen flex-col overflow-hidden bg-[#ece9d8] font-['DejaVu_Sans_Mono','Noto_Sans_CJK_SC',monospace] text-black select-none">
      <header className="shrink-0">
        {TOOLBARS.map((bar) => (
          <Toolbar key={bar.name} name={bar.name} items={bar.items} />
        ))}
      </header>
      <div className="flex min-h-0 flex-1">
        <Navigator />
        <Sash />
        <Viewport />
      </div>
      <Dashboard />
      <MessageBar />
      <StatusBar />
      <Watermark />
    </div>
  );
}
